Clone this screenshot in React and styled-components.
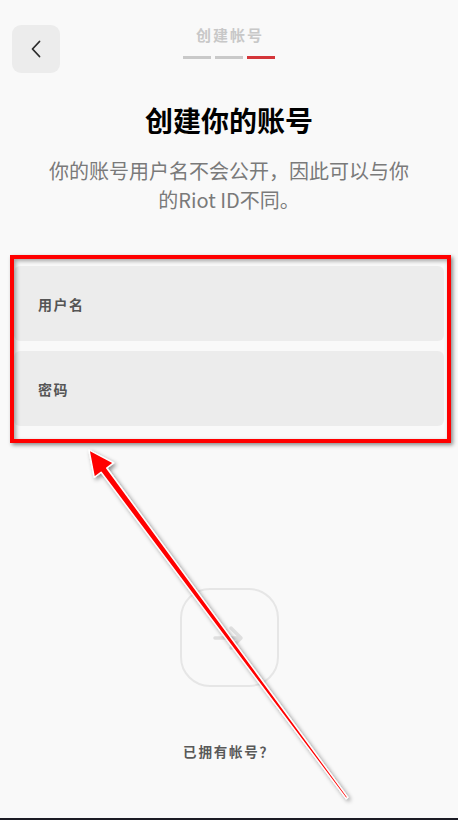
import styled, { createGlobalStyle } from "styled-components";

const GlobalStyle = createGlobalStyle`
  * { box-sizing: border-box; }
  html, body { margin: 0; padding: 0; background: #f9f9f9; }
  body {
    font-family: "Noto Sans CJK SC", "Noto Sans", sans-serif;
    -webkit-font-smoothing: antialiased;
  }
`;

const steps = [false, false, true];

const App = () => {
  return (
    <Page>
      <GlobalStyle />
      <TopBar>
        <BackButton aria-label="返回">
          <svg width="10" height="18" viewBox="0 0 10 18" fill="none">
            <path d="M8.5 1.5 L1.5 9 L8.5 16.5" stroke="#2b2b2b" strokeWidth="1.8" strokeLinecap="round" strokeLinejoin="round" />
          </svg>
        </BackButton>
        <StepHeader>
          <StepTitle>创建帐号</StepTitle>
          <StepBars>
            {steps.map((active, i) => (
              <StepBar key={i} $active={active} />
            ))}
          </StepBars>
        </StepHeader>
        <span />
      </TopBar>

      <Heading>创建你的账号</Heading>
      <Subtitle>
        你的账号用户名不会公开，因此可以与你的Riot ID不同。
      </Subtitle>

      <Form>
        <Field>
          <FieldLabel>用户名</FieldLabel>
        </Field>
        <Field>
          <FieldLabel>密码</FieldLabel>
        </Field>
      </Form>

      <NextButton aria-label="下一步">
        <svg width="36" height="36" viewBox="0 0 36 36" fill="none">
          <path d="M4 18 H30 M20 8 L30 18 L20 28" stroke="#dedede" strokeWidth="3.5" strokeLinecap="round" strokeLinejoin="round" />
        </svg>
      </NextButton>

      <SignIn>已拥有帐号？</SignIn>

      <NavEdge />

      <Highlight />
      <ArrowLayer width="458" height="820" viewBox="0 0 458 820">
        <defs>
          <filter id="shadow" x="-20%" y="-20%" width="140%" height="140%">
            <feDropShadow dx="2" dy="2" stdDeviation="2" floodColor="#000" floodOpacity="0.45" />
          </filter>
        </defs>
        <polygon
          points="89,450 113.5,462.9 106.7,468 347.8,797.4 346.2,798.6 101.1,472.2 94.3,477.3"
          fill="#ff0000"
          stroke="#ffffff"
          strokeWidth="1.4"
          strokeLinejoin="round"
          filter="url(#shadow)"
        />
      </ArrowLayer>
    </Page>
  );
};

export default App;

const Page = styled.div`
  position: relative;
  width: 458px;
  height: 820px;
  overflow: hidden;
  display: flex;
  flex-direction: column;
  align-items: center;
  background: #f9f9f9;
`;

const TopBar = styled.div`
  width: 100%;
  display: grid;
  grid-template-columns: 48px 1fr 48px;
  align-items: start;
  padding: 25px 12px 0;
`;

const BackButton = styled.button`
  width: 48px;
  height: 48px;
  border: none;
  border-radius: 9px;
  background: #ececec;
  display: flex;
  align-items: center;
  justify-content: center;
  padding: 0;
  cursor: pointer;
`;

const StepHeader = styled.div`
  display: flex;
  flex-direction: column;
  align-items: center;
`;

const StepTitle = styled.div`
  font-size: 15px;
  line-height: 20px;
  font-weight: 700;
  letter-spacing: 2px;
  padding-left: 2px;
  color: #c8c8c8;
`;

const StepBars = styled.div`
  display: flex;
  gap: 4px;
  margin-top: 11px;
`;

const StepBar = styled.div`
  width: 28px;
  height: 3px;
  background: ${({ $active }) => ($active ? "#d4363a" : "#c9c9c9")};
`;

const Heading = styled.h1`
  margin: 29px 0 0;
  font-size: 28px;
  line-height: 36px;
  font-weight: 700;
  color: #000;
`;

const Subtitle = styled.p`
  margin: 18px 0 0;
  width: 368px;
  text-align: center;
  font-size: 20px;
  line-height: 29px;
  color: #7a7a7a;
`;

const Form = styled.div`
  width: 100%;
  margin-top: 52px;
  padding: 0 14px;
  display: flex;
  flex-direction: column;
  gap: 10px;
`;

const Field = styled.div`
  height: 75px;
  border-radius: 6px;
  background: #ececec;
  display: flex;
  align-items: center;
  padding-left: 24px;
`;

const FieldLabel = styled.span`
  font-size: 14px;
  line-height: 20px;
  font-weight: 700;
  letter-spacing: 1.5px;
  color: #555;
`;

const NextButton = styled.button`
  margin-top: 162px;
  width: 99px;
  height: 99px;
  border-radius: 30px;
  border: 2px solid #e6e6e6;
  background: transparent;
  display: flex;
  align-items: center;
  justify-content: center;
  padding: 0;
`;

const SignIn = styled.div`
  margin-top: 54px;
  font-size: 13.5px;
  line-height: 20px;
  font-weight: 700;
  letter-spacing: 1.8px;
  color: #595959;
`;

const NavEdge = styled.div`
  position: absolute;
  left: 0;
  right: 0;
  bottom: 0;
  height: 2px;
  background: #1b1b24;
`;

const Highlight = styled.div`
  position: absolute;
  left: 10px;
  top: 255px;
  width: 441px;
  height: 188px;
  border: 4px solid #ff0000;
  box-shadow: 2px 2px 4px rgba(0, 0, 0, 0.45), inset 2px 2px 4px rgba(0, 0, 0, 0.35);
  pointer-events: none;
`;

const ArrowLayer = styled.svg`
  position: absolute;
  left: 0;
  top: 0;
  pointer-events: none;
`;
